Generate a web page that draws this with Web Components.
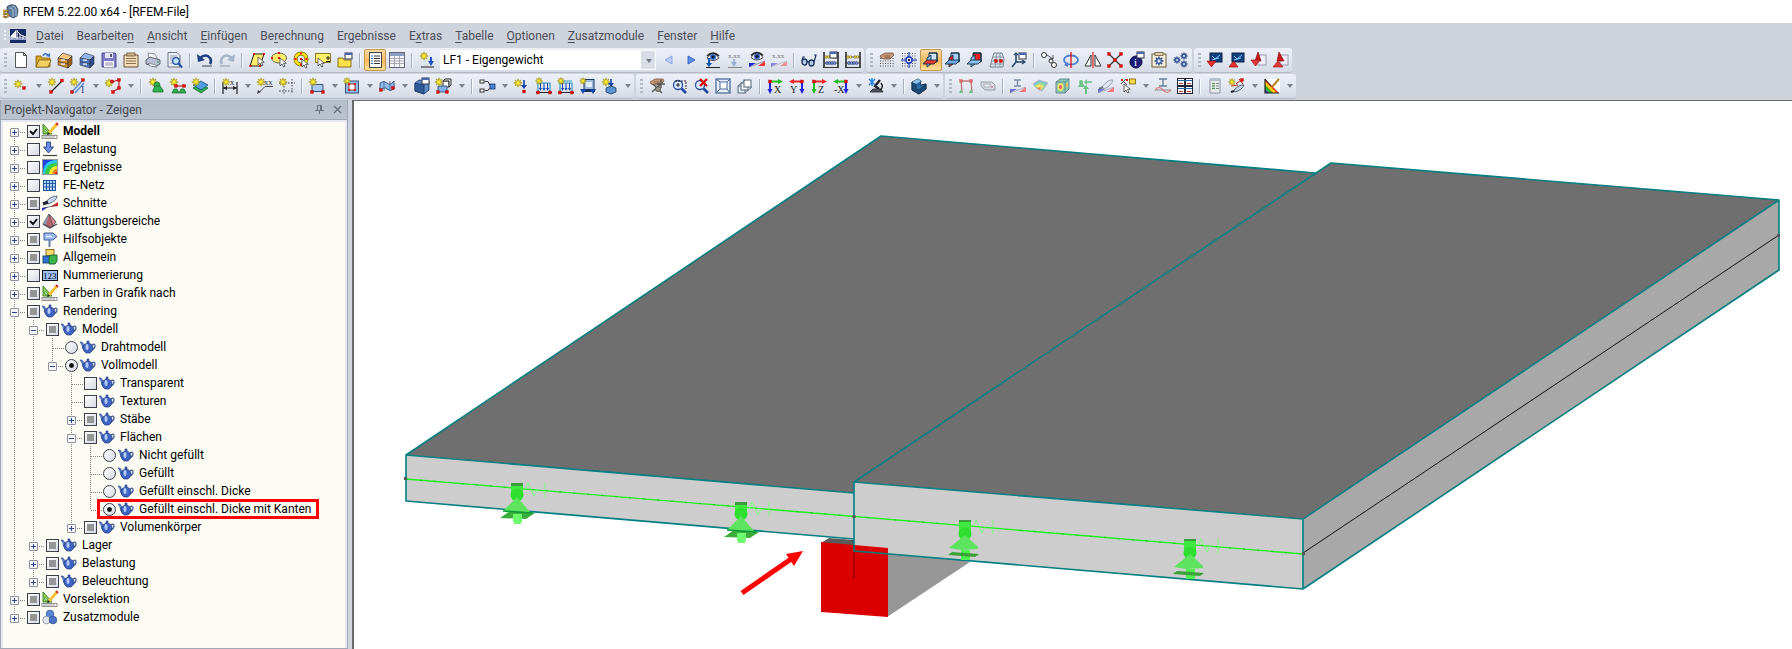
<!DOCTYPE html>
<html lang="de">
<head>
<meta charset="utf-8">
<title>RFEM 5.22.00 x64 - [RFEM-File]</title>
<style>
html,body{margin:0;height:100%}
body{font-family:Roboto,"Open Sans","Noto Sans",sans-serif;font-size:12px;line-height:18px;color:#000;background:#cfd3dc}
</style>
</head>
<body>
<rf-app></rf-app>
<script>
/* ---------- small SVG helpers ---------- */
const P=(d,f='none',s='none',w=1)=>`<path d="${d}" fill="${f}" stroke="${s}" stroke-width="${w}"/>`;
const L=(d,s='#222',w=1)=>P(d,'none',s,w);
const R=(x,y,w,h,f='none',s='none',sw=1)=>`<rect x="${x}" y="${y}" width="${w}" height="${h}" fill="${f}" stroke="${s}" stroke-width="${sw}"/>`;
const C=(x,y,r,f='none',s='none',w=1)=>`<circle cx="${x}" cy="${y}" r="${r}" fill="${f}" stroke="${s}" stroke-width="${w}"/>`;
const E=(x,y,a,b,f='none',s='none',w=1)=>`<ellipse cx="${x}" cy="${y}" rx="${a}" ry="${b}" fill="${f}" stroke="${s}" stroke-width="${w}"/>`;
const T=(x,y,z,t,f='#222')=>`<text x="${x}" y="${y}" font-size="${z}" fill="${f}" font-family="Liberation Serif,serif">${t}</text>`;
const G=(o,s)=>`<g opacity="${o}">${s}</g>`;
const nd=(x,y,c='#e01010')=>R(x-1.5,y-1.5,3,3,c,'#a00',.3);
const dt=(x,y)=>R(x-1,y-1,2,2,'#e01010');
const star=(x=4,y=4,r=4.2)=>{let d='';for(let i=0;i<16;i++){const a=i*Math.PI/8,q=i%2?r*.45:r;d+=(i?'L':'M')+(x+q*Math.cos(a)).toFixed(1)+' '+(y+q*Math.sin(a)).toFixed(1)}return P(d+'z','#ffee2c','#a3961f',.7)};
const cursor=(x,y)=>P(`M${x} ${y}v8l2-2 1.6 3 1.4-.7-1.5-3h2.8z`,'#fff','#444',.8);
const win=(x,y)=>R(x,y,7,6,'#fff','#334',1)+R(x,y,7,2,'#4a66b0');
const slope=(a='#f33',b='#22c')=>P('M9 14L16 9v5z',a)+P('M0 11h7L0 15z',b)+L('M0 15L16 9','#445',.5);
const eye=(x,y)=>P(`M${x-6} ${y+1}Q${x} ${y-8} ${x+6} ${y+1}Q${x} ${y+6} ${x-6} ${y+1}z`,'#fff','#222',.8)+L(`M${x-6} ${y-1}Q${x} ${y-7} ${x+6} ${y-1}`,'#222',1.6)+C(x,y,3,'#3766c4')+C(x,y,1.4,'#012');
const dots=(()=>{let s='';for(let i=1;i<16;i+=2.5)for(let j=6;j<16;j+=2.5)s+=R(i,j,1,1,'#555');return s})();
const dotsAll=(()=>{let s='';for(let i=1;i<16;i+=2.5)for(let j=1;j<16;j+=2.5)s+=R(i,j,1,1,'#555');return s})();
const hand=P('M1 4L6 1h8l1 2-4 4H5L2 6z','#c69a78','#6b4632',.7)+L('M5 4h6M6 5.500h5','#7b5040',.7);
const cab=(a,b,c)=>P('M1 6L6 1l9 3-4 4z',a,'#333',.6)+P('M1 6l10 2v8L1 13z',b,'#333',.6)+P('M11 8l4-4v8l-4 4z',c,'#333',.6)+L('M1 9.500l10 2.500','#333',.7)+R(4,7.500,4,1.200,'#fff')+R(4,11.500,4,1.200,'#fff');
const gear=(x,y,r,f='#7f9fd6')=>{let s='';for(let i=0;i<8;i++){const a=i*Math.PI/4;s+=`M${x} ${y}L${(x+(r+1)*Math.cos(a)).toFixed(1)} ${(y+(r+1)*Math.sin(a)).toFixed(1)}`}return L(s,'#2d4a86',1.400)+C(x,y,r*.75,f,'#2d4a86',.8)+C(x,y,r*.28,'#fff')};
const plane=(a,b,c)=>P('M6 1h8v9H6z',a,'#134',1)+P('M8 3L4 6v9l4-3z',b,'#134',.9)+P('M4 8h11l-4 4H0z',c,'#134',.9)+L('M6 1h8v9','#134',1);
const abac=()=>L('M1 0v16M15 0v16','#111',1.4)+L('M1 5h14M1 11h14','#333',.8)+[3,5.500,10,12.500].map(x=>C(x,5,1.300,'#f6e24a','#66501a',.5)).join('')+[4,6.500,9,11.500].map(x=>C(x,11,1.500,'#6f95e6','#224',.5)).join('')+L('M0 15.500h16','#333',1);
const mag=L('M10.500 10.500l4.500 4.500','#234a9a',2.600)+C(7,7,4.500,'#dceaff','#2b4f9c',1.300);
const load=L('M2 14V5h12v9','#39b',1.2)+[4.500,8,11.500].map(x=>L(`M${x} 5v6`,'#14a',1)+P(`M${x-1.500} 10h3L${x} 13z`,'#14a')).join('')+L('M0 14.500h16','#223',1)+nd(2,14.500)+nd(14,14.500);
const axis=(h,v,t)=>L('M3 3.500h9',h,2)+P('M11 1l5 2.500L11 6z',h)+L('M3 3v9',v,2)+P('M.500 11h5L3 16z',v)+nd(3,3.500)+T(7,14.500,10,t);
const axisR=(h,v,t)=>L('M4 3.500h9',h,2)+P('M5 1L0 3.500 5 6z',h)+L('M13 3v9',v,2)+P('M10.500 11h5L13 16z',v)+nd(13,3.500)+T(1,14.500,10,t);

const ICONS={
 app:P('M5 3q4-4 9-1l2 4-1 6-4 2-5-3z','#5e7d9d','#1e3448',.8)+L('M7 4q3-1 4 2v7M10 2q3 0 4 3v7','#a9c3da',1)+`<text x="1" y="14" font-size="11" font-weight="700" fill="#f1c64c" stroke="#4a3200" stroke-width=".5" font-family="Liberation Sans,sans-serif">5</text>`,
 mdi:R(0,1,16,14,'#182a66')+P('M0 9L6 2v8z','#fff')+L('M7 3q3 5 9 6M0 10h16M7 2v9M10 6v4M13 8v3M2 7v4','#fff',1)+R(0,11,16,1,'#9aa6d0'),
 new:P('M2.500.500h8l3 3v12h-11z','#fff','#555')+P('M10.500.500v3h3z','#ddd','#555'),
 open:P('M1 4h5l1 2h8v9H1z','#d9a62c','#7c5d12',.8)+P('M1 15L4 8h12l-3 7z','#f6cf62','#7c5d12',.8)+L('M8 4q2-4 5-1','#3b6fc0',1.600)+P('M11 4l4 1V1z','#3b6fc0'),
 drawer:cab('#f3c680','#d08c35','#9d611c'), drawerB:cab('#8fb2ec','#4f78c8','#2c4b90'),
 save:P('M1 1h13l1 1v13H1z','#7e7bc9','#3d3b80',.8)+R(4,1,8,5,'#e4e4f4')+R(3,9,10,6,'#fff')+R(9,2,2,3,'#556')+L('M4 11h8M4 13h8','#88a',1),
 notes:P('M1 3h14v12H1z','#f5dfb8','#6b5334',1)+R(4,1,8,3,'#cbb68d','#6b5334',.8)+L('M3 6.500h10M3 9h10M3 11.500h10','#89704a',1),
 print:P('M3 1l7 1 3 6-9-1z','#fff','#667',.7)+P('M1 8l4-3 10 3v4l-5 3-9-3z','#b9bfd4','#445',.8)+P('M3 11l8 2 1 2-7-1z','#fff','#556',.6)+C(13,10,.8,'#2a2'),
 preview:P('M1 .500h9l3 3V15H1z','#e8edf4','#667',.9)+L('M3 4h7M3 6h8M3 8h3M3 11h3','#89a',.9)+C(9,9,3.300,'#bfe0ff','#25509e',1.300)+L('M11.500 11.500L15 15.500','#25509e',2),
 undo:L('M3 6Q9 1 13 6q2 3 0 6','#1c3f82',2.500)+P('M0 2l1 8 7-2z','#1c3f82')+L('M5 14h10','#444',1),
 redo:L('M13 6Q7 1 3 6q-2 3 0 6','#a5b3c8',2.500)+P('M16 2l-1 8-7-2z','#a5b3c8')+L('M1 14h10','#999',1),
 selPar:P('M5 2h10l-4 12H1z','#ffef6a','#222',1)+dt(5,2)+dt(15,2)+dt(11,14)+dt(1.5,14)+cursor(9,5),
 selEll:E(8,6,7.5,5,'#ffef6a','#665',1)+dt(8,6)+dt(8,1)+dt(1,6)+cursor(9,6),
 selRing:C(8,7,5.500,'none','#776a00',4)+C(8,7,5.500,'none','#ffe600',2.600)+dt(8,7)+dt(8,1.500)+dt(13.5,7)+dt(8,12.5)+dt(2.5,7)+cursor(9,7),
 selPM:R(.5,1.500,15,9,'#ffef6a','#887a20')+cursor(3,6)+L('M11 6h4M13 4v4M11 9.500h4','#222',1),
 selWin:P('M1 6h5l1 2h7v7H1z','#ffe14a','#7d6a10',.9)+win(8,1),
 list:R(2.5,.5,12,15,'#fff','#444')+L('M7 4h6M7 6.500h6M7 9h6M7 11.500h6','#333',1)+L('M4 4h2M4 6.500h2M4 9h2M4 11.500h2','#26c',1),
 table:R(.5,.5,15,15,'#f4f6fa','#667')+R(1,1,14,3,'#8a9dc4')+L('M1 6.500h14M1 9h14M1 11.500h14M5.500 4v11M10.500 4v11','#99a',.8),
 starLoad:star(5,4)+L('M12 5v6','#1f56c0',2)+P('M9 9h6l-3 5z','#1f56c0')+L('M2 15h13','#222',1),
 prev:P('M11 4v8L4 8z','#b9cdf4','#7f9be0',.8), next:P('M5 4v8l7-4z','#5f92ea','#1e4eb0',.8),
 eye:eye(8,5)+L('M4 6v7','#15a',2)+P('M1 11h6l-3 4z','#15a')+L('M1 15.500h14','#222',1),
 xxx:T(1,6,7,'x.xx','#777')+L('M7 7v6','#9ab0d6',2)+P('M4 10h6l-3 5z','#9ab0d6')+L('M1 15.500h14','#888',1),
 eyeRed:eye(8,4.500)+slope(), xxxRed:T(1,6,7,'x.xx','#777')+G(.45,slope()),
 glasses:E(3.5,10,2.5,3,'#b9cbe8','#1d3560',1.400)+E(10.5,11,2.5,3,'#b9cbe8','#1d3560',1.400)+L('M6 10q1-1 2 0M1 9L2 5h2M13 10l2-7h-2','#1d3560',1.200),
 abacWin:abac()+win(7,0), abac:abac(),
 handGrid:dots+hand,
 gridBlue:dotsAll+L('M8 0v16M0 8h16','#1030c0',1)+C(8,8,3,'#fff','#1030c0',1.300)+R(7,7,2,2,'#222'),
 plane1:plane('#cfe4fb','#8cc0f4','#e33'), plane2:plane('#a8cef4','#e22','#6ba9e8'), plane3:plane('#e22','#8cc0f4','#8cc0f4'),
 meshRed:P('M5 1h8l2 6-1 8H1l2-8z','#dde4ea','#678',.9)+L('M4 5h10M3 9h11M2 12h12M8 1L6 15M11 1v14','#789',.8)+nd(7,9)+nd(12,9),
 ucs:L('M5 1v9h8M5 10l-4 5','#246',1.500)+L('M3 3l2-2 2 2M11 8l3 2-3 2','#246',1.200)+win(8,1),
 circles:C(3,3,2.500,'#fff','#333')+C(10,9,2,'#fff','#333')+C(13,13,2.500,'#fff','#333')+L('M6 3l6 4M12 3v4H8','#333',.8),
 rotate:E(8,8,7,4.500,'none','#4d7fd0',1.800)+P('M5 10v5l-4-2z','#4d7fd0')+L('M8 0v16','#d00',1.200),
 mirror:P('M6 3v11H0z','#fff','#333')+P('M10 3v11h6z','#fff','#333')+L('M8 0v16','#d00',1),
 cross:L('M1 1l14 14M15 1L1 15','#333',1.300)+nd(2,2)+nd(14,2)+nd(2,14)+nd(14,14)+nd(8,8),
 info:C(7,10,6,'#1b1f7c','#0a0d40')+T(5,14,11,'i','#fff')+win(8,0),
 gearPage:R(1,2,14,13,'#f3f0dd','#6b5b34')+R(4,.500,8,3,'#ddd2b0','#6b5b34',.8)+gear(8,9,3.500),
 gears:gear(4,8,2.5)+gear(11,4,2.500)+gear(11,12,2.500),
 scrDn:R(3,1,12,9,'#0e3f7e','#0a2247')+L('M5 4l3 3 5-4M5 8l7-2','#8cf',1)+P('M0 9h9l-4.500 6z','#e03030','#900',.6),
 scrUp:R(3,1,12,9,'#0e3f7e','#0a2247')+L('M5 4l3 3 5-4M5 8l7-2','#8cf',1)+P('M0 15h9L4.500 9z','#e03030','#900',.6),
 redDn:R(7,3,8,10,'#eef','#99a')+P('M4 9L7 0l3 9z','#c81818','#800',.6)+P('M0 8h9l-4.500 6z','#e23a3a','#900',.6),
 redUp:R(7,3,8,10,'#eef','#99a')+P('M4 9L6 0l5 9z','#c81818','#800',.6)+P('M0 15h10L5 9z','#e23a3a','#900',.6),

 node:star(5,6)+nd(11,10), line:star(4,4)+L('M3 14L14 3','#222',1.200)+nd(3,14)+nd(14,2.500),
 member:star(4,4)+L('M2 14L12 3M5 15L14 5','#5b8fd8',1.600)+nd(13,2)+nd(2,14)+T(11,15,10,'I','#247'),
 poly:star(4,5)+L('M6 4l8-2v8l-6 4','#b22',1.200)+nd(7,3.500)+nd(14,2)+nd(14,10)+nd(8,14),
 supp:star(5,4)+C(9,7,3,'#2fae4e','#0d6a26',.7)+P('M5 12l2-4h5l3 4v2H5z','#2fae4e','#0d6a26',.7),
 lsupp:star(4,4)+L('M5 8h11','#b22',1.200)+nd(6,8)+nd(14,8)+P('M2 15l2-4h3l2 4zM9 15l2-4h3l2 4z','#2fae4e','#0d6a26',.7),
 ssupp:P('M1 10l8-4 7 4-7 5z','#2fae4e','#0d6a26',.8)+P('M1 7l8-4 7 4-7 5z','#4f9fe0','#1d4a80',.8)+star(4,4),
 dim:L('M1 4v12M15 4v12M1 10h14','#222',1.200)+P('M1 10l4-2v4zM15 10l-4-2v4z','#222')+T(8,7,8,'x')+star(4,4,3.800),
 dimXX:star(4,4)+T(7,7,6,'XX')+L('M16 8.500H8l-6 6','#444',1)+P('M0 16l1-4 3 2z','#444'),
 rectDots:L('M5 2v14M0 5h16M13 1v15M0 13h15','#444',1).replace('/>',' stroke-dasharray="1.5 1.500"/>')+star(4,4),
 surf:P('M3 6.500h11v7H3z','#a9cbf2','#357',1)+star(4,4)+nd(14,14)+nd(3,14),
 opening:R(1.500,3,13,12,'#8fb9ea','#357')+R(5,6,6,6,'#fff','#b22',1)+dt(5,6)+dt(11,6)+dt(5,12)+dt(11,12)+star(3,3,3.500),
 shell:P('M1 5q4-3 7 0t7-2v8q-4 3-7 0t-7 2z','#8fb9ea','#357',.9)+L('M5 3v10M11 3v10','#357',.7)+nd(2,12)+nd(14,10),
 solid:P('M1 5l4-3 10 1v9l-5 4-9-3z','#5b8bc8','#1d3560',.8)+P('M1 5l9 2v9l-9-3z','#2e5a9a','#1d3560',.8)+win(8,0),
 solidSet:R(7,3,6,6,'#fff','#333')+P('M7 3l2-2h6v6l-2 2V3z','#ddd','#333')+P('M2 8h9v6H2z','#7fb0ea','#357',.9)+star(3,4)+nd(2,14)+nd(11,14),
 conn:R(1,2,4,3,'#fff','#333')+R(1,11,4,3,'#fff','#333')+L('M6 3.500h3l2 4M6 12.500h3l2-3','#333',1)+R(11,6,5,5,'#3f86d8','#1d3560',.8),
 nload:star(4,5)+L('M10 2v7','#14a',1.600)+P('M7 7h6l-3 4z','#14a')+nd(10,13.500),
 load1:load+star(3,3,3.600), load2:load+L('M2 3h12','#39b',1)+star(3,3,3.600),
 load3:R(4,1.500,10,10,'#9db9dc','#1d3560')+R(6,4,6,5,'#e3eefb')+P('M3 11h12v3H3z','#16305c')+P('M0 11h6l-3 5zM10 11h6l-3 5z','#14a')+star(3,3,3.400),
 load4:star(4,4)+L('M9 1v5','#14a',1.600)+P('M6 5h6L9 9z','#14a')+P('M4 10l5-2 5 2v4l-5 2-5-2z','#5b93d6','#1d3560',.8),
 handSel:hand+L('M3 14L13 5M4 6l9 9M12 2v8M8 6h8','#555',1.400)+C(9,11,2.500,'#998','#443',.8),
 zoomWin:mag+L('M4 3h11v8','#222',1).replace('/>',' stroke-dasharray="2 1"/>')+L('M7 5v4M5 7h4','#222',1),
 zoomX:mag+L('M7 1l7 7M14 1L7 8','#d00',2.200),
 boxP:R(1,1,14,14,'#e7edf5','#4f6d9c',1.300)+R(5,4,7,7,'#fff','#4f6d9c',1)+L('M1 1l4 3M15 1l-3 3M1 15l4-4M15 15l-3-4','#4f6d9c',1),
 boxI:R(1,8,7,7,'#e7edf5','#567')+R(4,5,7,7,'#f2f5fa','#567')+R(7,2,7,7,'#fff','#567')+L('M1 8l7-6M8 15l7-6','#567',.8),
 ax:axis('#2b2','#22d','X'), ay:axisR('#e22','#22d','Y'), az:axis('#e22','#2b2','Z'), amx:axisR('#2b2','#22d','-X'),
 micro:L('M12 2l-5 6 4 3','#223',2.400)+P('M2 14h13l-2-3H5z','#556','#222',.8)+L('M13 5q3 4-1 7','#222',1.400)+L('M1 1l6 6M7 1L1 7M4 0v8','#2a86e0',1.500),
 solidL:P('M1 4l6-3 3 2-1 4 6-1v5l-7 5-7-4z','#2f6da8','#0e2a44',.9)+P('M1 4l4 2v5l3 1 7-6v5l-7 5-7-4z','#1d4a78','#0e2a44',.7)+P('M1 4l6-3 3 2-5 3z','#8fc0e8'),
 frameG:G(.6,L('M4 14L3 3h10l1 11','#a33',1.300)+nd(3,3)+nd(13,3)+P('M1 15l2-4 2 4zM11 15l2-4 2 4z','#2a4')),
 remote:G(.55,P('M1 4h11l3 3v5H5L1 8z','#c9cdd4','#666')+R(4,6,6,3,'#eee','#777',.8)+C(12,9,1,'#a44')),
 iSlope:G(.6,L('M4 2h7M7.500 2v6M4 8h7','#357',1.400)+slope()),
 surfRes:G(.8,P('M1 6l6-4 9 3-6 8q-5-1-9-7z','#58b9e0','#b88',.6)+P('M2 8l5-4 7 2-4 6z','#7fd67a')+P('M3 8l5-2 4 2-3 4z','#f3e04e')+P('M5 10l4-1-1 3z','#ef6a3a')),
 cubeRes:G(.8,P('M2 4l4-3h9v10l-4 4H2z','#6fc7a0','#467',.9)+L('M2 4h9v11M11 4l4-3','#467',.8)+E(6.500,9,3,4,'#f0e24a')+E(6.500,9,1.500,2,'#e44')+E(13,7,1,2.500,'#e8c040')),
 greenRes:G(.6,C(5,4,2,'#2a4')+P('M2 9l2-4h3l2 4zM10 16l0-5M7 11l3-4 3 4h-2v5h-2v-5z','#2a4')+L('M16 4h-6','#2a4',1.600)+P('M11 1v6L8 4z','#2a4')),
 knifeG:G(.6,P('M4 9q6-8 11-7-2 6-9 9z','#dbe4f0','#456',.8)+L('M1 11l4-2','#234',2.200)+slope()),
 resSel:L('M1 1l6 6M6 1L1 6','#444',1)+dt(2,2)+dt(7,2)+cursor(4,6)+R(9.5,1,6,5,'#f5d94a','#76610a',.8),
 iWave:G(.7,L('M4 1h8M8 1v7M4 8h8','#357',1.400)+L('M0 12h16','#444',.8)+L('M0 12q4-5 8 0t8 0','#d33',1.100)),
 tables:R(.5,.5,7,7,'#fff','#223')+R(8.500,.500,7,7,'#fff','#223')+R(.5,8.500,7,7,'#fff','#223')+R(8.500,8.500,7,7,'#fff','#223')+L('M1 2.500h14M1 10.500h14','#26a',1.200)+L('M2 5.500h4M10 5.500h4M2 13.500h4M10 13.500h4','#c33',1.200),
 docs:G(.7,P('M3 1h10v14H3z','#eef2e8','#678')+R(3,1,10,2,'#9ab')+L('M5 5.500h3M5 8h3M5 10.500h3','#373',1.300)+L('M9 5.500h3M9 8h3M9 10.500h3','#556',1)),
 knifeStar:P('M5 12q6-6 10-5-2 5-9 7z','#c6d6ea','#345',.8)+L('M2 14l3-1','#223',2)+L('M7 6l5-4M14 6l-4-5M2 8l7-1','#b22',1)+nd(13,2)+star(3,4,3.600),
 colors:R(1,1,15,14,'#fff')+P('M1 1v14h14z','#e22')+P('M1 3l12 12H9L1 7z','#fc0')+P('M1 7l8 8H5l-4-4z','#2b2')+P('M1 11l4 4H1z','#24d')+L('M1 1v14h14','#222',1.200)+L('M15 1L8 9','#b58b28',2.200)+L('M1 1l6 7','#222',1),

 tModel:P('M1 1v10h9z','#8fd05a','#2e7a1e',.9)+P('M3 6v3h3z','#fff','#2e7a1e',.6)+L('M15 1L7 10','#f1c13a',3)+L('M14 0l2 2','#c33',2)+P('M5 12l1-3 2 2z','#222')+R(0,12.500,15,3,'#fff','#777',.8)+L('M2 13v2M4 13v2M6 13v2M8 13v2M10 13v2M12 13v2','#777',.7),
 tLoad:P('M4.500 1h4v5h3l-5 6-5-6h3z','#6a8fe0','#26407e',.9)+L('M1 14.500h14','#444',1.200),
 tRes:R(.5,.5,15,15,'#2040e0','#999')+P('M1 15Q1 1 15 1v14z','#2cc8e8')+P('M3 15Q4 4 15 4v11z','#36c944')+P('M7 15q1-8 8-8v8z','#f4ec30')+P('M10 15q1-5 5-5v5z','#f08020')+P('M13 15q0-2 2-2v2z','#d00'),
 tMesh:R(1.500,3.500,12,10,'#b5d6fa','#1d56a0')+L('M1 6.500h13M1 10h13M4.500 3v10M7.500 3v10M10.500 3v10','#1d56a0',1),
 tCut:P('M3 8Q8 1 15 1q0 5-9 8z','#c5d7ef','#456',.8)+L('M1 9l5-2','#223',3)+P('M8 12l8-5v4z','#e22')+P('M0 16v-3l6-1z','#22d')+L('M0 13.500l15-3.500','#345',.7),
 tPyr:P('M7 1L1 11l7 4 6-6z','#b7606c','#445',.8)+P('M7 1L1 11l3 1.500z','#8a9aa8')+P('M7 1l7 8-3 3.500z','#d98a90','#445',.6)+L('M1 11l7 4 7-4','#445',1.300),
 tSign:P('M2 2h9l4 3.500L11 9H2z','#9cb9f2','#41609e')+L('M7.500 9v7','#6b7fa5',2)+L('M4 5.500h6','#dfeaff',1.500),
 tCubes:R(4,.5,8,6,'#f3d96a','#7c6a1a',.9)+R(1,7,7,7,'#2f74d4','#18396e',.9)+P('M7 8l2-2h6v6l-2 3H7z','#3cb54a','#17602a',.9),
 tNum:R(.5,3.500,15,10,'#9fc3ee','#111')+T(1,12,9,'123','#001'),
 tPot:L('M12 6q3-2 3 1t-4 4','#3d5894',1.300)+P('M0 3h2l3 4-1 4q-2-1-2-5z','#5f83cf','#2b468c',.6)+P('M3 9q0-4 5-5 5 1 5 5 0 3-3 5H6q-3-2-3-5z','#3f63c2','#22397e',.7)+E(7,8,1.500,3,'#b4cbf6')+C(8,3,1.200,'#3f63c2','#22397e',.6),
 tMod:C(8,5,3.800,'#5a86d8','#2c4a8a',.7)+C(4.500,11,3.800,'#dfe4e8','#7b828c',.7)+C(11,11,3.800,'#4a73cc','#2c4a8a',.7)
};
const svg=(n,s=16)=>`<svg width="${s}" height="${s}" viewBox="0 0 16 16" aria-hidden="true">${ICONS[n]||''}</svg>`;

const define=(name,html,extra)=>{
  const t=document.createElement('template');t.innerHTML=html;
  customElements.define(name,class extends HTMLElement{
    constructor(){super();this.attachShadow({mode:'open'}).append(t.content.cloneNode(true));}
    connectedCallback(){if(extra&&!this.ready){this.ready=true;extra(this,this.shadowRoot)}}
  });
};

define('rf-icon','<style>:host{display:block;width:16px;height:16px}svg{display:block;overflow:visible}</style>',(el,r)=>r.append(document.createRange().createContextualFragment(svg(el.getAttribute('name')))));

define('rf-title',`<style>
:host{display:flex;align-items:center;gap:5px;height:23px;padding-left:2px;background:#fff}
h1{margin:0;font-size:12px;font-weight:400;line-height:18px}
</style><rf-icon name="app"></rf-icon><h1><slot></slot></h1>`);

define('rf-menubar',`<style>
:host{display:flex;align-items:center;height:25px;padding-left:4px;color:#4b4d58}
nav{display:flex;gap:13px;margin-left:10px}
.grip{width:2px;height:11px;margin-right:4px;background:repeating-linear-gradient(#f4f6fa 0 2px,transparent 2px 4px)}
button{all:unset;font-size:12px;line-height:18px;white-space:nowrap}
u{text-underline-offset:2px}
</style><span class="grip"></span><rf-icon name="mdi"></rf-icon><nav></nav>`,(el,r)=>{
  r.querySelector('nav').innerHTML=['_Datei','Bearbeite_n','_Ansicht','_Einfügen','Be_rechnung','Er_gebnisse','E_xtras','_Tabelle','_Optionen','_Zusatzmodule','_Fenster','_Hilfe']
   .map(s=>`<button type="button">${s.replace(/_(.)/,'<u>$1</u>')}</button>`).join('');
});

/* items: icon name, "|" separator, "name+" with drop-down arrow, "*name" pressed */
define('rf-toolbar',`<style>
:host{display:flex;align-items:center;height:25px;box-sizing:border-box;border-bottom:1px solid #b4b9c4;border-radius:3px;background:linear-gradient(#edf0f7,#e3e7f0 50%,#d6dae4)}
.grip{flex:none;width:3px;height:15px;margin:0 3px 0 4px;background:repeating-linear-gradient(#b3b7c1 0 2px,transparent 2px 4px)}
button{all:unset;display:grid;place-items:center;flex:none;width:22px;height:22px;box-sizing:border-box}
button.on{border:1px solid #c69a4e;border-radius:2px;background:linear-gradient(#fbd9a4,#fdb95c 55%,#fee09a)}
button.dd{width:13px}
button.dd::before{content:"";border:3px solid transparent;border-top:4px solid #7c808a;border-bottom:0}
.sep{flex:none;width:1px;height:15px;margin:0 3px;background:#a9aebb;border-right:1px solid #f8f9fc}
.combo{display:flex;position:relative;margin:0 2px}
.combo::after{content:"";position:absolute;right:4px;top:9px;border:3px solid transparent;border-top:4px solid #70757f;border-bottom:0;pointer-events:none}
select{appearance:none;width:216px;height:20px;box-sizing:border-box;border-radius:0;padding:0 16px 0 3px;margin:0;background:linear-gradient(90deg,#fff 0 201px,#d9dde6 201px);border:solid #fff;border-width:1px 1px 1px 0;font:inherit;font-size:12px;line-height:18px;color:#000}
</style><span class="grip"></span>`,(el,r)=>{
  const h=el.getAttribute('items').split(' ').map(i=>{
    if(i==='|')return '<span class="sep"></span>';
    if(i==='combo')return '<span class="combo"><select aria-label="Lastfall"><option>LF1 - Eigengewicht</option></select></span>';
    const on=i[0]==='*',dd=i.endsWith('+'),n=i.replace(/[*+]/g,'');
    return `<button type="button" aria-label="${n}" class="${on?'on':''}"><rf-icon name="${n}"></rf-icon></button>`+(dd?`<button type="button" class="dd" aria-label="${n} Menü"></button>`:'');
  }).join('');
  r.append(document.createRange().createContextualFragment(h));
});

define('rf-toolrow',`<style>:host{display:flex;gap:2px;margin-bottom:1px}</style><slot></slot>`);

define('rf-panel',`<style>
:host{display:flex;flex-direction:column;box-sizing:border-box;border:1px solid #a2a8b6;border-top:0;background:#e6e9f2}
header{display:flex;align-items:center;gap:9px;height:19px;padding:0 5px 0 3px;background:linear-gradient(#b4becb,#bac3cf);border-bottom:1px solid #a2a8b6;color:#45484f}
h2{flex:1;margin:0;font-size:12px;font-weight:400;line-height:18px}
button{all:unset;display:block;width:9px;height:9px}
svg{display:block;overflow:visible}
.body{flex:1;margin:2px 2px 0;background:#fcfbf4}
</style><header><h2><slot name="title"></slot></h2>
<button type="button" aria-label="Anheften"><svg width="9" height="9" viewBox="0 0 9 9"><path d="M2.500 5V.500h4V5M5.500.500V5M0 5.500h9M4.500 5.500V9" fill="none" stroke="#6a6f7a"/></svg></button>
<button type="button" aria-label="Schließen"><svg width="9" height="9" viewBox="0 0 9 9"><path d="M1 1l7 7M8 1L1 8" fill="none" stroke="#6a6f7a" stroke-width="1.300"/></svg></button>
</header><div class="body"><slot></slot></div>`);

/* [label, icon, control, children]; controls: c on, u off, m mixed, r radio off, R radio on */
const TREE=[
 ['Modell','tModel','c',[]],['Belastung','tLoad','u',[]],['Ergebnisse','tRes','u',[]],['FE-Netz','tMesh','u',[]],
 ['Schnitte','tCut','m',[]],['Glättungsbereiche','tPyr','c',[]],['Hilfsobjekte','tSign','m',[]],['Allgemein','tCubes','m',[]],
 ['Nummerierung','tNum','u',[]],['Farben in Grafik nach','tModel','m',[]],
 ['Rendering','tPot','m',[
   ['Modell','tPot','m',[
     ['Drahtmodell','tPot','r'],
     ['Vollmodell','tPot','R',[
       ['Transparent','tPot','u'],['Texturen','tPot','u'],['Stäbe','tPot','m',[]],
       ['Flächen','tPot','m',[['Nicht gefüllt','tPot','r'],['Gefüllt','tPot','r'],['Gefüllt einschl. Dicke','tPot','r'],['Gefüllt einschl. Dicke mit Kanten','tPot','R',null,true]]],
       ['Volumenkörper','tPot','m',[]]]]]],
   ['Lager','tPot','m',[]],['Belastung','tPot','m',[]],['Beleuchtung','tPot','m',[]]]],
 ['Vorselektion','tModel','m',[]],['Zusatzmodule','tMod','m',[]]];

define('rf-tree',`<style>
:host{display:block;padding-left:2px;--check:url("data:image/svg+xml,%3Csvg xmlns='http://www.w3.org/2000/svg' viewBox='0 0 11 11'%3E%3Cpath d='M2 5l3 3 4-5' fill='none' stroke='%23111' stroke-width='2'/%3E%3C/svg%3E")}
.row{display:flex;align-items:center;height:18px}
.g,.n{position:relative;flex:none;width:19px;height:18px;--v:repeating-linear-gradient(#808080 0 1px,transparent 1px 2px)}
.n{width:22px;display:flex;align-items:center;padding:2px 0 0 5px;box-sizing:border-box}
.g.v,.n.v{background:var(--v) 9px 0/1px 100% no-repeat}
.n::after{content:"";width:6px;height:1px;margin-left:1px;background:repeating-linear-gradient(90deg,#808080 0 1px,transparent 1px 2px)}
.n.leaf::after{width:11px;margin-left:5px}
.n.last{background:var(--v) 9px 0/1px 10px no-repeat}
.n.first{background:var(--v) 9px 10px/1px 8px no-repeat}
.n button{all:unset;flex:none;width:9px;height:9px;box-sizing:border-box;border:1px solid #8b909c;border-radius:1px;background:linear-gradient(90deg,#2a4590,#2a4590) 1px 3px/5px 1px no-repeat,#f6f7fb}
.n button[aria-expanded=false]{background:linear-gradient(#2a4590,#2a4590) 1px 3px/5px 1px no-repeat,linear-gradient(#2a4590,#2a4590) 3px 1px/1px 5px no-repeat,#f6f7fb}
label{position:relative;display:flex;align-items:center;height:18px;white-space:nowrap;font-size:12px}
input{appearance:none;flex:none;width:13px;height:13px;margin:0 2px 0 0;border:1px solid #3c4048;background:linear-gradient(135deg,#fff,#d5d9e3)}
input[type=radio]{border-radius:50%}
input.m{background:linear-gradient(#959595,#959595) center/7px 7px no-repeat,linear-gradient(135deg,#fff,#d5d9e3)}
input[type=checkbox]:checked{background:var(--check) center/11px 11px no-repeat,linear-gradient(135deg,#fff,#d5d9e3)}
input[type=radio]:checked{background:radial-gradient(circle,#111 0 2px,#333 2px,transparent 3px),linear-gradient(135deg,#fff,#d5d9e3)}
rf-icon{margin-right:5px}
.hot::after{content:"";position:absolute;inset:-1px -8px -1px -6px;border:3px solid #f00}
.top{font-weight:700}
</style><div class="rows"></div>`,(el,r)=>{
  let out='';
  const walk=(list,guides,group)=>list.forEach(([t,ic,c,kids,hot],i)=>{
    const last=i===list.length-1,root=!guides.length;
    const cls=[root&&i===0?'first':last?'last':'v',kids?'':'leaf'].join(' ');
    const radio=/r/i.test(c);
    out+=`<div class="row">${guides.map(g=>`<span class="g ${g?'v':''}"></span>`).join('')}<span class="n ${cls}">${kids?`<button type="button" aria-label="${t}" aria-expanded="${kids.length>0}"></button>`:''}</span><label class="${hot?'hot':''} ${root&&i===0?'top':''}"><input type="${radio?'radio':'checkbox'}" ${radio?`name="${group}"`:''} class="${c==='m'?'m':''}" ${c==='R'||c==='c'?'checked':''}><rf-icon name="${ic}"></rf-icon>${t}</label></div>`;
    if(kids&&kids.length)walk(kids,[...guides,!last],group+'-'+i);
  });
  walk(TREE,[],'g');
  r.querySelector('.rows').innerHTML=out;
  r.querySelectorAll('.m').forEach(x=>x.indeterminate=true);
});

/* line supports: spring symbol, bearing block, ball, cone, base plate */
const spring=(x,y)=>L(`M${x} ${y}l3-7 6 13 3-6M${x+20} ${y-7}v14`,'#7dfa7d',1);
const supL=(x,y)=>spring(x+8,y+1)+R(x-6,y-6,12,13,'#3fe83f')+R(x-6,y-6,12,3,'#3c9c3c')+C(x,y+6,6.500,'#2fdf2f')+P(`M${x-17} ${y+29}l10-7 25 2-9 6z`,'#3cae3c')+P(`M${x} ${y+8}L${x-14} ${y+22}l28 2z`,'#5ee35e')+L(`M${x-14} ${y+22}l30 2`,'#0a9a3a',1.500)+P(`M${x-4} ${y+25}h9v8h-1v2h-7v-2h-1z`,'#6dff6d');
const supR=(x,y)=>spring(x+8,y+1)+R(x-6,y-6,12,13,'#3fe83f')+R(x-6,y-6,12,2,'#3c9c3c')+C(x,y+8,6.500,'#2fdf2f')+P(`M${x} ${y+9}l-16 13 12 2 17-1v-2z`,'#5ee35e')+R(x-4,y+24,9,10,'#4df04d')+P(`M${x-17} ${y+29}l4-3 27 2-4 3z`,'#3aa03a');
define('rf-viewport',`<style>:host{display:block;background:#fff;box-sizing:border-box;border-left:2px solid #6a6a6a;overflow:hidden}svg{display:block;width:100%;height:auto}</style>
<svg viewBox="354 101 1438 548" role="img" aria-label="3D-Modell">
${P('M887 546V617L970 562z','#979797')}
${P('M406 455L881 136 1315 173 854 494z','#6f6f6f')}
${P('M406 455L854 493V539L406 501z','#cdcdcd')}
${P('M821 543L829 538 854 540V546z','#5a5a5a')}
${P('M854 482L1331 163 1779 200 1303 519z','#6f6f6f')}
${P('M854 482L1303 519V589L854 551z','#cdcdcd')}
${P('M1303 519L1779 200V270L1303 589z','#a8a8a8')}
${P('M821 542L854 545 888 548V617L821 612z','#da0000')}
${L('M854 552V579','#960000',1.500)}
${L('M1303 553L1779 235','#111',1)}
${L('M406 479L1303 554','#19f219',1.300)}
${L('M406 479L1303 554','#12c812',1).replace('/>',' stroke-dasharray="2 12"/>')}
<g stroke-linejoin="round">${L('M1315 173L881 136 406 455 854 493M406 455V501L854 539M854 482L1331 163 1779 200V270L1303 589 854 551V482L1303 519V589M1303 519L1779 200','#007f80',1.600)}</g>
${R(404,477,3,3,'#555')}${R(1302,552,3,3,'#555')}${R(1777,234,3,3,'#555')}${R(852.5,515,3,3,'#555')}
${supL(517,489)}${supL(741,508)}${supR(965,526)}${supR(1190,545)}
${L('M742 593L794 557','#f00',5)}${P('M803 551L786 554 794 566z','#f00')}
</svg>`);

define('rf-app',`<style>
:host{display:flex;flex-direction:column;min-height:100vh;background:#cfd3dc}
main{flex:1;display:grid;grid-template-columns:348px 1fr;column-gap:4px;align-items:stretch}
rf-viewport{border-top:1px solid #6a6a6a}
</style>
<rf-title>RFEM 5.22.00 x64 - [RFEM-File]</rf-title>
<rf-menubar></rf-menubar>
<rf-toolrow>
<rf-toolbar items="new open drawer drawerB save notes print preview | undo redo | selPar selEll selRing selPM selWin | *list table | starLoad combo prev next eye xxx eyeRed xxxRed | glasses abacWin abac"></rf-toolbar>
<rf-toolbar items="handGrid gridBlue *plane1 plane2 plane3 meshRed ucs | circles rotate mirror cross info gearPage gears"></rf-toolbar>
<rf-toolbar items="scrDn scrUp redDn redUp"></rf-toolbar>
</rf-toolrow>
<rf-toolrow>
<rf-toolbar items="node+ line member+ poly+ | supp lsupp ssupp | dim+ dimXX rectDots | surf+ opening+ shell+ solid solidSet+ | conn+ nload load1 load2 load3 load4+"></rf-toolbar>
<rf-toolbar items="handSel zoomWin zoomX boxP boxI | ax ay az amx+ micro+ | solidL+"></rf-toolbar>
<rf-toolbar items="frameG remote | iSlope surfRes cubeRes greenRes knifeG resSel+ iWave tables | docs knifeStar+ colors+"></rf-toolbar>
</rf-toolrow>
<main><rf-panel><span slot="title">Projekt-Navigator - Zeigen</span><rf-tree></rf-tree></rf-panel><rf-viewport></rf-viewport></main>`);
</script>
</body>
</html>
